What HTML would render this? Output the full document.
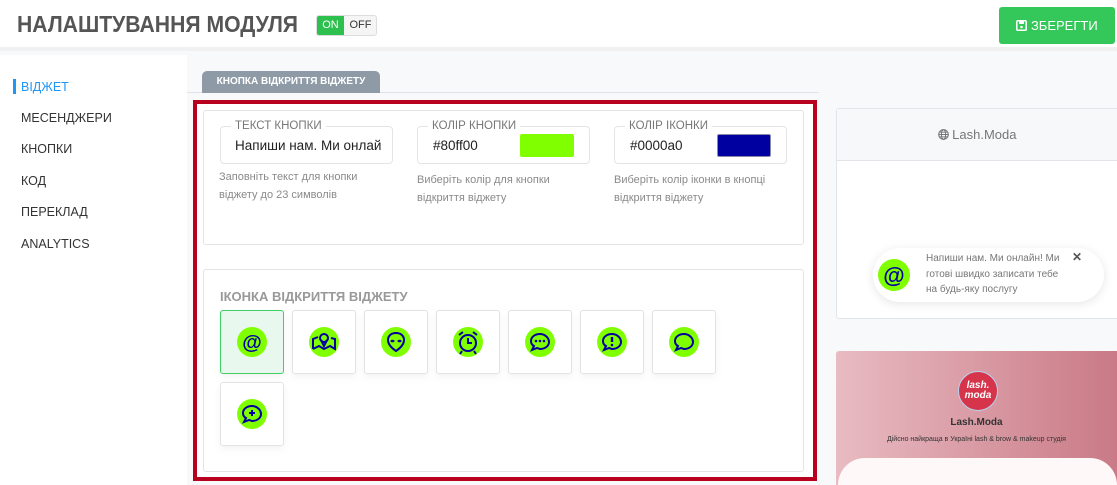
<!DOCTYPE html>
<html><head><meta charset="utf-8"><style>
*{box-sizing:border-box;margin:0;padding:0}
html,body{width:1117px;height:485px;overflow:hidden}
body{background:#f8f9fa;font-family:"Liberation Sans",sans-serif;position:relative}
.a{position:absolute}
.hdr{left:0;top:0;width:1117px;height:51px;background:#fff;border-bottom:4px solid #f1f1f1}
.side{left:0;top:55px;width:187px;height:430px;background:#fff}
.nav{left:21px;font-size:12.5px;color:#333}
.fs{border:1px solid #e2e5e8;border-radius:4px;background:#fff;height:38px}
.lg{font-size:11.5px;color:#777;background:#fff;padding:0 4px;top:-7px;left:10px;line-height:13px}
.help{font-size:11px;color:#8a8a8a;line-height:18px}
.ib{width:64px;height:64px;border:1px solid #e3e3e3;border-radius:3px;background:#fff;box-shadow:0 3px 8px rgba(0,0,0,.05)}
.ib svg{position:absolute;left:16px;top:16px}
</style></head><body>
<div class="a hdr"></div>
<div class="a" style="left:17px;top:11px;font-size:23px;color:#555;font-weight:bold;white-space:nowrap;transform:scaleX(.92);transform-origin:0 0">НАЛАШТУВАННЯ МОДУЛЯ</div>
<div class="a" style="left:316px;top:15px;width:61px;height:21px;border:1px solid #ddd;border-radius:3px;background:#f5f5f5;overflow:hidden;font-size:11px">
<div class="a" style="left:0;top:0;width:27px;height:19px;background:#2ec04f;color:#fff;text-align:center;line-height:19px">ON</div>
<div class="a" style="left:27px;top:0;width:33px;height:19px;color:#333;text-align:center;line-height:19px">OFF</div></div>
<div class="a" style="left:999px;top:7px;width:116px;height:37px;background:#34c759;border-radius:3px;color:#fff;font-size:13px;line-height:37px;text-align:center">
<svg width="11" height="11" viewBox="0 0 11 11" style="vertical-align:-1px"><rect x=".8" y=".8" width="9.4" height="9.4" rx="1" fill="none" stroke="#fff" stroke-width="1.5"/><rect x="3" y="1" width="5" height="3" fill="#fff"/><circle cx="5.5" cy="7" r="1.3" fill="#fff"/></svg> ЗБЕРЕГТИ</div>
<div class="a side"></div>
<div class="a" style="left:13px;top:79px;width:3px;height:15px;background:#2196f3"></div>
<div class="a nav" style="top:80px;color:#2196f3">ВІДЖЕТ</div>
<div class="a nav" style="top:111px">МЕСЕНДЖЕРИ</div>
<div class="a nav" style="top:142px">КНОПКИ</div>
<div class="a nav" style="top:174px">КОД</div>
<div class="a nav" style="top:205px">ПЕРЕКЛАД</div>
<div class="a nav" style="top:237px">ANALYTICS</div>
<div class="a" style="left:187px;top:92px;width:632px;height:1px;background:#dfe3e6"></div>
<div class="a" style="left:202px;top:71px;width:178px;height:22px;background:#8e9ba6;border-radius:5px 5px 0 0;color:#fff;font-size:10px;line-height:21px;text-align:center;font-weight:bold">КНОПКА ВІДКРИТТЯ ВІДЖЕТУ</div>
<div class="a" style="left:193px;top:100px;width:624px;height:381px;border:4px solid #b8001f;background:#fff"></div>
<div class="a" style="left:203px;top:110px;width:601px;height:135px;border:1px solid #e4e4e4;border-radius:3px;background:#fff"></div>
<div class="a fs" style="left:220px;top:126px;width:173px"><span class="a lg">ТЕКСТ КНОПКИ</span><span class="a" style="left:14px;top:11px;font-size:13.5px;color:#222;white-space:nowrap;overflow:hidden;width:150px">Напиши нам. Ми онлай</span></div>
<div class="a help" style="left:219px;top:168px">Заповніть текст для кнопки<br>віджету до 23 символів</div>
<div class="a fs" style="left:417px;top:126px;width:173px"><span class="a lg">КОЛІР КНОПКИ</span><span class="a" style="left:15px;top:11px;font-size:13.5px;color:#222">#80ff00</span><div class="a" style="left:102px;top:7px;width:54px;height:23px;background:#80ff00;border-radius:2px"></div></div>
<div class="a help" style="left:417px;top:171px">Виберіть колір для кнопки<br>відкриття віджету</div>
<div class="a fs" style="left:614px;top:126px;width:173px"><span class="a lg">КОЛІР ІКОНКИ</span><span class="a" style="left:15px;top:11px;font-size:13.5px;color:#222">#0000a0</span><div class="a" style="left:102px;top:7px;width:54px;height:23px;background:#0000a0;border-radius:2px;border:1px solid #88a"></div></div>
<div class="a help" style="left:614px;top:171px">Виберіть колір іконки в кнопці<br>відкриття віджету</div>
<div class="a" style="left:203px;top:269px;width:601px;height:203px;border:1px solid #e4e4e4;border-radius:3px;background:#fff"></div>
<div class="a" style="left:220px;top:289px;font-size:13px;color:#999;font-weight:bold">ІКОНКА ВІДКРИТТЯ ВІДЖЕТУ</div>
<div class="a ib" style="left:220px;top:310px;border-color:#3fcf62;background:#e9f8ee"><svg width="30" height="30"><circle cx="15" cy="15" r="15" fill="#80ff00"/><text x="15" y="22" font-size="20" font-weight="bold" text-anchor="middle" fill="#0000a0" font-family="Liberation Sans">@</text></svg></div>
<div class="a ib" style="left:292px;top:310px"><svg width="30" height="30"><circle cx="15" cy="15" r="15" fill="#80ff00"/><path d="M4 22l6-3 5 3 6-3 5 3V12l-4-1M4 22V12l5-2" fill="none" stroke="#0000a0" stroke-width="2"/><circle cx="15" cy="11" r="4" fill="none" stroke="#0000a0" stroke-width="2"/><path d="M12 13l3 6 3-6" fill="none" stroke="#0000a0" stroke-width="2"/></svg></div>
<div class="a ib" style="left:364px;top:310px"><svg width="30" height="30"><circle cx="15" cy="15" r="15" fill="#80ff00"/><path d="M15 6c-5 0-8 3-8 7 0 5 5 9 8 11 3-2 8-6 8-11 0-4-3-7-8-7z" fill="none" stroke="#0000a0" stroke-width="2"/><ellipse cx="11.5" cy="14" rx="2" ry="1.3" fill="#0000a0"/><ellipse cx="18.5" cy="14" rx="2" ry="1.3" fill="#0000a0"/></svg></div>
<div class="a ib" style="left:436px;top:310px"><svg width="30" height="30"><circle cx="15" cy="15" r="15" fill="#80ff00"/><circle cx="15" cy="16" r="8" fill="none" stroke="#0000a0" stroke-width="2"/><path d="M15 11v5h4M6 8l4-3M24 8l-4-3M9 24l-2 3M21 24l2 3" fill="none" stroke="#0000a0" stroke-width="2"/></svg></div>
<div class="a ib" style="left:508px;top:310px"><svg width="30" height="30"><circle cx="15" cy="15" r="15" fill="#80ff00"/><path d="M15 7c-5 0-9 3-9 7 0 2 1 4 3 5l-2 4 5-2c1 0 2 1 3 1 5 0 9-3 9-7s-4-8-9-8z" fill="none" stroke="#0000a0" stroke-width="2"/><circle cx="11" cy="14" r="1.3" fill="#0000a0"/><circle cx="15" cy="14" r="1.3" fill="#0000a0"/><circle cx="19" cy="14" r="1.3" fill="#0000a0"/></svg></div>
<div class="a ib" style="left:580px;top:310px"><svg width="30" height="30"><circle cx="15" cy="15" r="15" fill="#80ff00"/><path d="M15 7c-5 0-9 3-9 7 0 2 1 4 3 5l-2 4 5-2c1 0 2 1 3 1 5 0 9-3 9-7s-4-8-9-8z" fill="none" stroke="#0000a0" stroke-width="2"/><path d="M15 10v5" stroke="#0000a0" stroke-width="2.4"/><circle cx="15" cy="18" r="1.3" fill="#0000a0"/></svg></div>
<div class="a ib" style="left:652px;top:310px"><svg width="30" height="30"><circle cx="15" cy="15" r="15" fill="#80ff00"/><path d="M15 7c-5 0-9 3-9 7 0 2 1 4 3 5l-2 4 5-2c1 0 2 1 3 1 5 0 9-3 9-7s-4-8-9-8z" fill="none" stroke="#0000a0" stroke-width="2"/></svg></div>
<div class="a ib" style="left:220px;top:382px"><svg width="30" height="30"><circle cx="15" cy="15" r="15" fill="#80ff00"/><path d="M15 7c-5 0-9 3-9 7 0 2 1 4 3 5l-2 4 5-2c1 0 2 1 3 1 5 0 9-3 9-7s-4-8-9-8z" fill="none" stroke="#0000a0" stroke-width="2"/><path d="M15 11v6M12 14h6" stroke="#0000a0" stroke-width="2"/></svg></div>
<div class="a" style="left:836px;top:108px;width:281px;height:211px;border:1px solid #e1e4e8;border-right:none;border-radius:3px 0 0 3px;background:#fff"></div>
<div class="a" style="left:837px;top:109px;width:280px;height:52px;background:#f6f8fa;border-bottom:1px solid #e1e4e8;text-align:center;line-height:51px;font-size:13px;color:#777">
<svg width="11" height="11" viewBox="0 0 12 12" style="vertical-align:-1px"><circle cx="6" cy="6" r="5.2" fill="none" stroke="#777" stroke-width="1.2"/><ellipse cx="6" cy="6" rx="2.3" ry="5.2" fill="none" stroke="#777" stroke-width="1.1"/><path d="M1 6h10M2 3.5h8M2 8.5h8" stroke="#777" stroke-width="1"/></svg> Lash.Moda</div>
<div class="a" style="left:873px;top:248px;width:231px;height:54px;background:#fff;border-radius:27px;box-shadow:0 2px 10px rgba(0,0,0,.1)"></div>
<svg class="a" style="left:878px;top:259px" width="32" height="32"><circle cx="16" cy="16" r="16" fill="#80ff00"/><text x="16" y="24" font-size="22" font-weight="bold" text-anchor="middle" fill="#0000a0" font-family="Liberation Sans">@</text></svg>
<div class="a" style="left:926px;top:251px;font-size:10px;line-height:15.5px;color:#777">Напиши нам. Ми онлайн! Ми<br>готові швидко записати тебе<br>на будь-яку послугу</div>
<div class="a" style="left:1072px;top:250px;font-size:12px;color:#555;font-weight:bold">✕</div>
<div class="a" style="left:836px;top:351px;width:281px;height:134px;background:linear-gradient(90deg,#e9bbc2,#c97a86);border-radius:3px 0 0 0"></div>
<div class="a" style="left:838px;top:458px;width:279px;height:27px;background:#fff8f9;border-radius:40px 40px 0 0"></div>
<div class="a" style="left:958px;top:371px;width:40px;height:40px;border-radius:50%;background:#d6344b;border:1px solid #b7d3f0;color:#fff;font-size:10px;font-style:italic;font-weight:bold;text-align:center;line-height:10px;padding-top:9px">lash.<br>moda</div>
<div class="a" style="left:836px;top:417px;width:281px;text-align:center;font-size:10px;color:#333;font-weight:bold">Lash.Moda</div>
<div class="a" style="left:836px;top:436px;width:281px;text-align:center;font-size:7px;color:#333">Дійсно найкраща в Україні lash &amp; brow &amp; makeup студія</div>
</body></html>
